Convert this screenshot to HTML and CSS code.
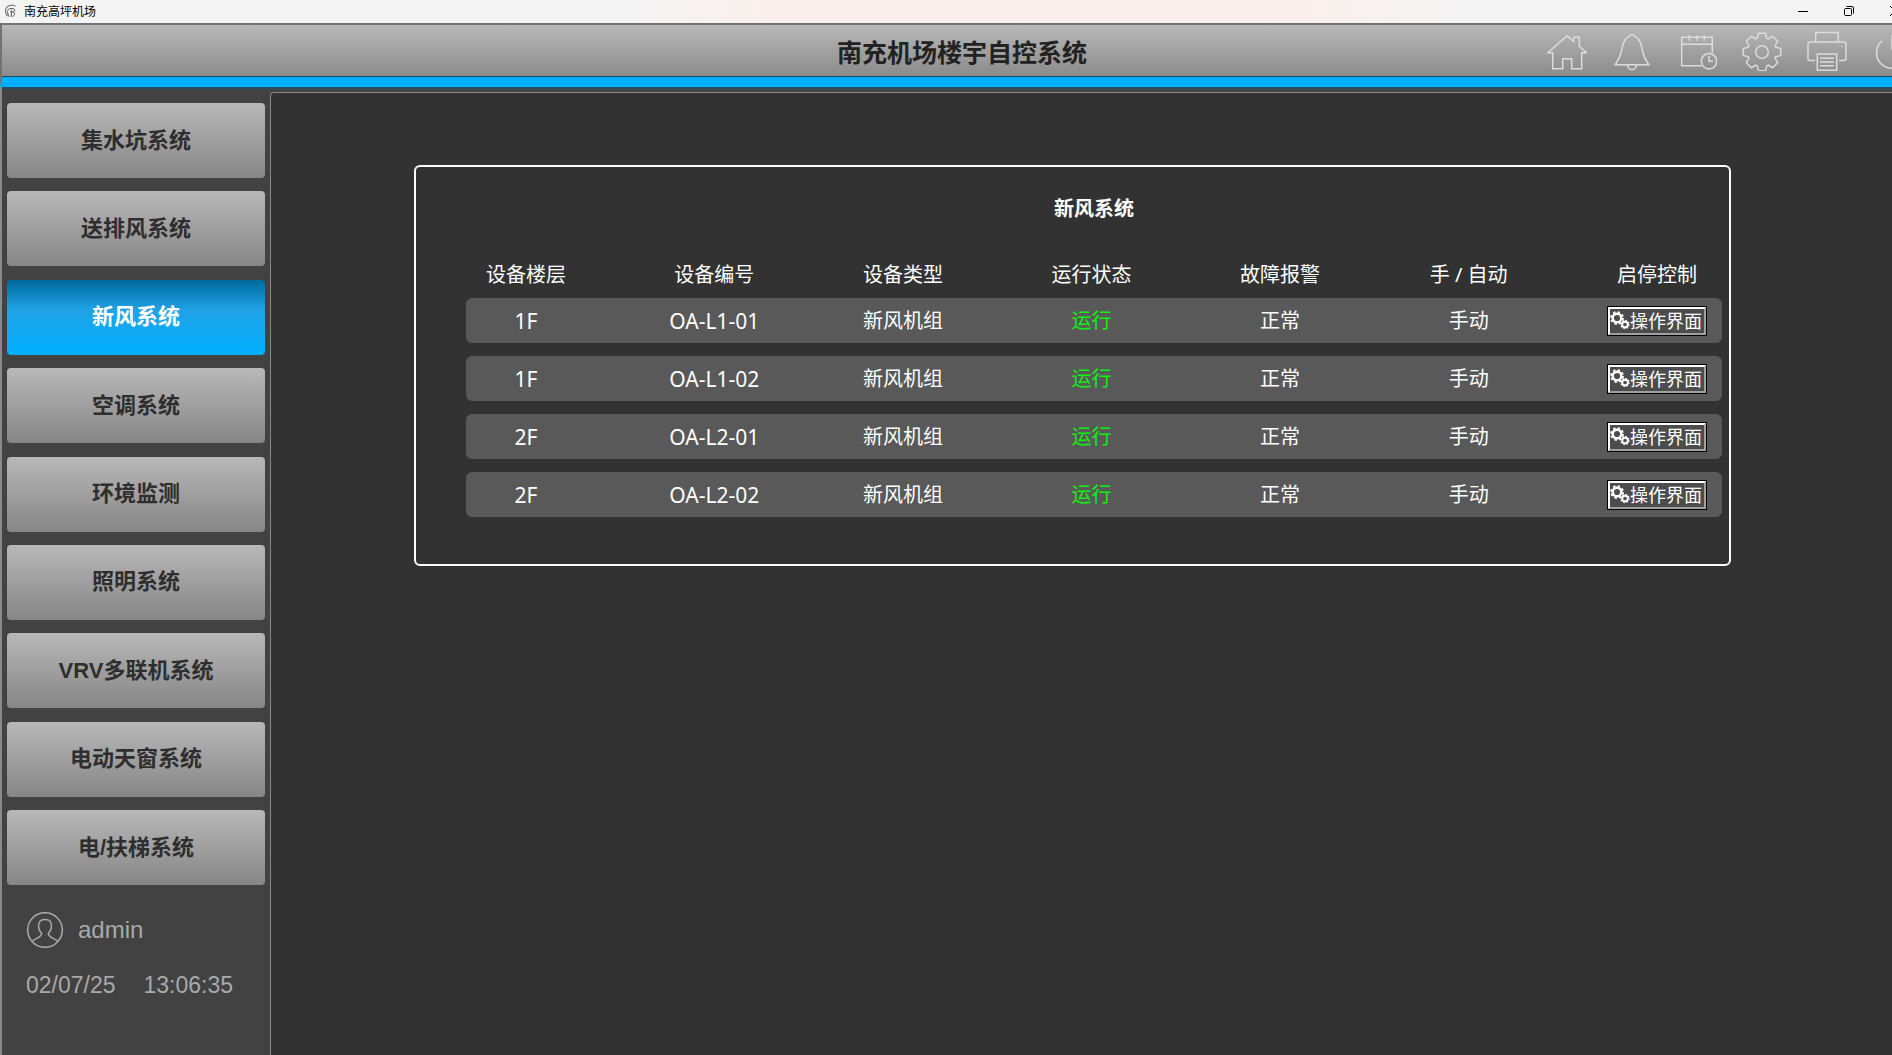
FILE: index.html
```html
<!DOCTYPE html>
<html lang="zh-CN">
<head>
	<meta charset="UTF-8">
	<title>南充高坪机场</title>
	<meta name="viewport" content="width=device-width, initial-scale=1">
	<link rel="stylesheet" href="styles.css">
</head>
<body>
	<svg class="defs" aria-hidden="true">
		<symbol id="gears" viewBox="0 0 20 20">
			<circle cx="7" cy="7" r="4.3" fill="none" stroke="currentColor" stroke-width="2.4"/>
			<circle cx="7" cy="7" r="6" fill="none" stroke="currentColor" stroke-width="1.8" stroke-dasharray="2.4 2.3"/>
			<circle cx="15" cy="13.5" r="2.8" fill="none" stroke="currentColor" stroke-width="1.9"/>
			<circle cx="15" cy="13.5" r="4" fill="none" stroke="currentColor" stroke-width="1.4" stroke-dasharray="1.6 1.5"/>
		</symbol>
	</svg>
	<div class="app">
		<div class="titlebar">
			<svg class="logo" viewBox="0 0 14 14">
				<path d="M4 12.5C.5 9 .8 4 4 2.3 7 .6 10.3 1 11.5 2.2M5 12.5C3 9 3 5.5 5.5 4.600H9C11.500 4.600 11 8 9 8H6.500M9 8C11.500 8.500 11 12 8.500 12.300M7.300 6V12.800"/>
			</svg>
			<span class="window_name">南充高坪机场</span>
			<button class="win" aria-label="最小化"><svg viewBox="0 0 12 12"><path d="M1 6.5H11"/></svg></button>
			<button class="win" aria-label="还原"><svg viewBox="0 0 12 12"><rect x="1.5" y="3.5" width="7" height="7" rx="1"/><path d="M3.5 1.5H9Q10.5 1.5 10.5 3V8.5"/></svg></button>
			<button class="win" aria-label="关闭"><svg viewBox="0 0 12 12"><path d="M1 1L11 11M11 1L1 11"/></svg></button>
		</div>
		<header class="head">
			<h1>南充机场楼宇自控系统</h1>
			<div class="tools">
				<button aria-label="主页"><svg viewBox="0 0 40 40"><path d="M20 4.7L.8 21.7H5.7V37.7H15.7V27.7H24.7V37.7H34.7V21.7H39.4L32.3 15.3V6.3H26.7V10.5Z"/></svg></button>
				<button aria-label="报警"><svg viewBox="0 0 40 40"><path d="M3.3 33.7H36.7C33 28.5 31.7 26 30.5 20 29 11 27 6.5 23 5.5 22 3 18 3 17 5.5 13 6.5 11 11 9.5 20 8.3 26 7 28.5 3.3 33.7ZM15.5 34a4.5 4.5 0 0 0 9 0"/></svg></button>
				<button aria-label="日程"><svg viewBox="0 0 40 40"><path d="M24.5 34.7H4.7V6.3H35.3V22M4.7 13.3H35.3M12.3 4V9.7M20 4V9.7M27.3 4V9.7"/><circle cx="32" cy="30.3" r="7.7"/><path d="M32 25V30.3H36"/></svg></button>
				<button aria-label="设置"><svg viewBox="-20 -21 40 40"><path d="M-4.8-13.7L-3.5-18.7H3.5L4.8-13.7 6.3-13.1 10.7-15.7 15.7-10.7 13.1-6.3 13.7-4.8 18.7-3.5V3.5L13.7 4.8 13.1 6.3 15.7 10.7 10.7 15.7 6.3 13.1 4.8 13.7 3.5 18.7H-3.5L-4.8 13.7-6.3 13.1-10.7 15.7-15.7 10.7-13.1 6.3-13.7 4.8-18.7 3.5V-3.5L-13.7-4.8-13.1-6.3-15.7-10.7-10.7-15.7-6.3-13.1Z"/><circle r="6.3"/></svg></button>
				<button aria-label="打印"><svg viewBox="0 0 40 40"><path d="M8.7 10.7V1.5H31.3V10.7M8 29.5H3Q1 29.5 1 27.5V13Q1 11 3 11H37Q39 11 39 13V27.5Q39 29.5 37 29.5H32M10.3 23H29.7V39.3H10.3ZM13 27.3H27M13 31H27M13 34.7H27M34.5 15.2H35.5"/></svg></button>
				<button aria-label="退出"><svg viewBox="0 0 40 40"><path d="M10 10A15.5 15.5 0 1 0 30 10M20 4V19"/></svg></button>
			</div>
		</header>
		<div class="wrap">
			<aside class="side">
				<nav class="menu">
					<button>集水坑系统</button>
					<button>送排风系统</button>
					<button class="active">新风系统</button>
					<button>空调系统</button>
					<button>环境监测</button>
					<button>照明系统</button>
					<button>VRV多联机系统</button>
					<button>电动天窗系统</button>
					<button>电/扶梯系统</button>
				</nav>
				<div class="user">
					<svg viewBox="0 0 36 36"><circle cx="18" cy="18" r="17.3"/><path d="M5 29.5C7 26.5 14.5 26 14.7 21.5 11.5 18 11.5 14 11.7 12.5 12 9 14.5 7.5 18 7.5S24 9 24.3 12.5C24.5 14 24.5 18 21.3 21.5 21.5 26 29 26.5 31 29.5"/></svg>
					<span>admin</span>
				</div>
				<div class="clock"><span>02/07/25</span><span>13:06:35</span></div>
			</aside>
			<main class="content">
				<section class="card">
					<table class="units">
						<caption>新风系统</caption>
						<thead>
							<tr>
								<th class="first">设备楼层</th>
								<th>设备编号</th>
								<th>设备类型</th>
								<th>运行状态</th>
								<th>故障报警</th>
								<th>手 / 自动</th>
								<th class="last">启停控制</th>
							</tr>
						</thead>
						<tbody>
							<tr>
								<td class="first">1F</td>
								<td class="code">OA-L1-01</td>
								<td>新风机组</td>
								<td class="run">运行</td>
								<td>正常</td>
								<td>手动</td>
								<td class="last"><button class="operate"><svg><use href="#gears"/></svg>操作界面</button></td>
							</tr>
							<tr>
								<td class="first">1F</td>
								<td class="code">OA-L1-02</td>
								<td>新风机组</td>
								<td class="run">运行</td>
								<td>正常</td>
								<td>手动</td>
								<td class="last"><button class="operate"><svg><use href="#gears"/></svg>操作界面</button></td>
							</tr>
							<tr>
								<td class="first">2F</td>
								<td class="code">OA-L2-01</td>
								<td>新风机组</td>
								<td class="run">运行</td>
								<td>正常</td>
								<td>手动</td>
								<td class="last"><button class="operate"><svg><use href="#gears"/></svg>操作界面</button></td>
							</tr>
							<tr>
								<td class="first">2F</td>
								<td class="code">OA-L2-02</td>
								<td>新风机组</td>
								<td class="run">运行</td>
								<td>正常</td>
								<td>手动</td>
								<td class="last"><button class="operate"><svg><use href="#gears"/></svg>操作界面</button></td>
							</tr>
						</tbody>
					</table>
				</section>
			</main>
		</div>
	</div>
</body>
</html>
```

FILE: styles.css
```css
* {
	box-sizing: border-box;
}
body {
	margin: 0;
	overflow: hidden;
	background: #424242;
	font-family: "Noto Sans", "Noto Sans CJK SC", sans-serif;
}
button {
	margin: 0;
	padding: 0;
	border: 0;
	background: none;
	font: inherit;
	color: inherit;
	cursor: pointer;
}
svg {
	display: block;
	fill: none;
	stroke: currentColor;
}
.defs {
	position: absolute;
	width: 0;
	height: 0;
}
/* the window runs a little past the right edge of the screen */
.app {
	width: calc(100% + 30px);
	min-height: 100vh;
	display: flex;
	flex-flow: column nowrap;
}
.titlebar {
	height: 23px;
	padding: 0 4px 2px 4px;
	display: flex;
	align-items: center;
	background: linear-gradient(90deg, #f3f3f3 33%, #faefec 40%, #faefec 68%, #f3f3f3 76%);
	color: #000;
	font-family: "Noto Sans CJK SC", sans-serif;
	font-size: 12px;
	line-height: 20px;
}
.logo {
	width: 14px;
	height: 14px;
	margin-right: 6px;
	color: #555;
}
.window_name {
	flex: 1;
}
.win {
	width: 46px;
	height: 21px;
	display: flex;
	justify-content: center;
	align-items: center;
}
.win svg {
	width: 12px;
	height: 12px;
}
.head {
	height: 64px;
	display: grid;
	grid-template-columns: 1fr auto 1fr;
	align-items: center;
	border-top: 2px solid #727272;
	border-left: 2px solid #727272;
	border-bottom: 10px solid #00b0ff;
	background: linear-gradient(#b8b8b8, #8a8a8a);
	box-shadow: inset 0 -1px #134a60, 0 2px #235064;
}
.head h1 {
	grid-column: 2;
	margin: 0;
	color: #222;
	font-family: "Noto Sans CJK SC", sans-serif;
	font-size: 25px;
	line-height: 36px;
}
.tools {
	display: flex;
	justify-content: flex-end;
	gap: 25px;
	padding-right: 10px;
	color: #dcdcdc;
}
.tools svg {
	width: 40px;
	height: 40px;
	stroke-width: 1.5;
}
.wrap {
	flex: 1;
	display: flex;
	border-left: 2px solid #8a8a8a;
}
.side {
	width: 268px;
	padding: 16px 5px 0;
	color: #a9a9a9;
	font-family: "Liberation Sans", sans-serif;
	font-size: 24px;
	line-height: 28px;
}
.menu {
	min-height: 782px;
	display: flex;
	flex-flow: column nowrap;
	justify-content: space-between;
}
.menu button {
	height: 75px;
	border-radius: 4px;
	background: linear-gradient(#b8b8b8, #868686);
	color: #2e2e2e;
	font-family: "Liberation Sans", "Noto Sans CJK SC", sans-serif;
	font-size: 22px;
	font-weight: bold;
}
.menu .active {
	background: linear-gradient(#006a9c, #20a2e6 40%, #00b0ff);
	color: #fff;
}
.user {
	display: flex;
	align-items: center;
	gap: 15px;
	padding: 27px 20px 0;
}
.user svg {
	width: 36px;
	height: 36px;
	stroke-width: 1.5;
}
.clock {
	display: flex;
	gap: 28px;
	padding: 23px 19px 0;
	font-size: 23px;
}
.content {
	flex: 1;
	margin-top: 5px;
	padding: 72px 191px 0 143px;
	border-top: 1px solid #8a8a8a;
	border-left: 1px solid #8a8a8a;
	border-top-left-radius: 4px;
	background: #323232;
}
.card {
	padding: 27px 7px 34px 50px;
	border: 2px solid #fff;
	border-radius: 6px;
	color: #fff;
	font-size: 20px;
	line-height: 30px;
}
.units {
	width: 100%;
	table-layout: fixed;
	border-spacing: 0 13px;
}
.units caption {
	font-weight: bold;
	padding-bottom: 28px;
}
.units th {
	padding: 0;
	font-weight: normal;
	height: 20px;
	line-height: 20px;
}
.units td {
	height: 45px;
	padding: 0;
	background: #595959;
	text-align: center;
}
.units .first {
	width: 154px;
	padding-right: 34px;
}
.units .last {
	width: 159px;
	padding-left: 29px;
}
.units td.first {
	border-radius: 6px 0 0 6px;
}
.units td.last {
	border-radius: 0 6px 6px 0;
}
.units td.first,
.units .code {
	font-size: 21px;
}
.units .run {
	color: #10f010;
}
.operate {
	width: 98px;
	height: 28px;
	margin: 0 auto;
	display: flex;
	align-items: center;
	border: 2px solid;
	border-color: #fff #a0a0a0 #a0a0a0 #fff;
	outline: 1px solid #000;
	background: #4c4c4c;
	font-size: 18px;
	line-height: 24px;
	white-space: nowrap;
}
.operate svg {
	width: 20px;
	height: 20px;
	flex: none;
	stroke: none;
}
```
